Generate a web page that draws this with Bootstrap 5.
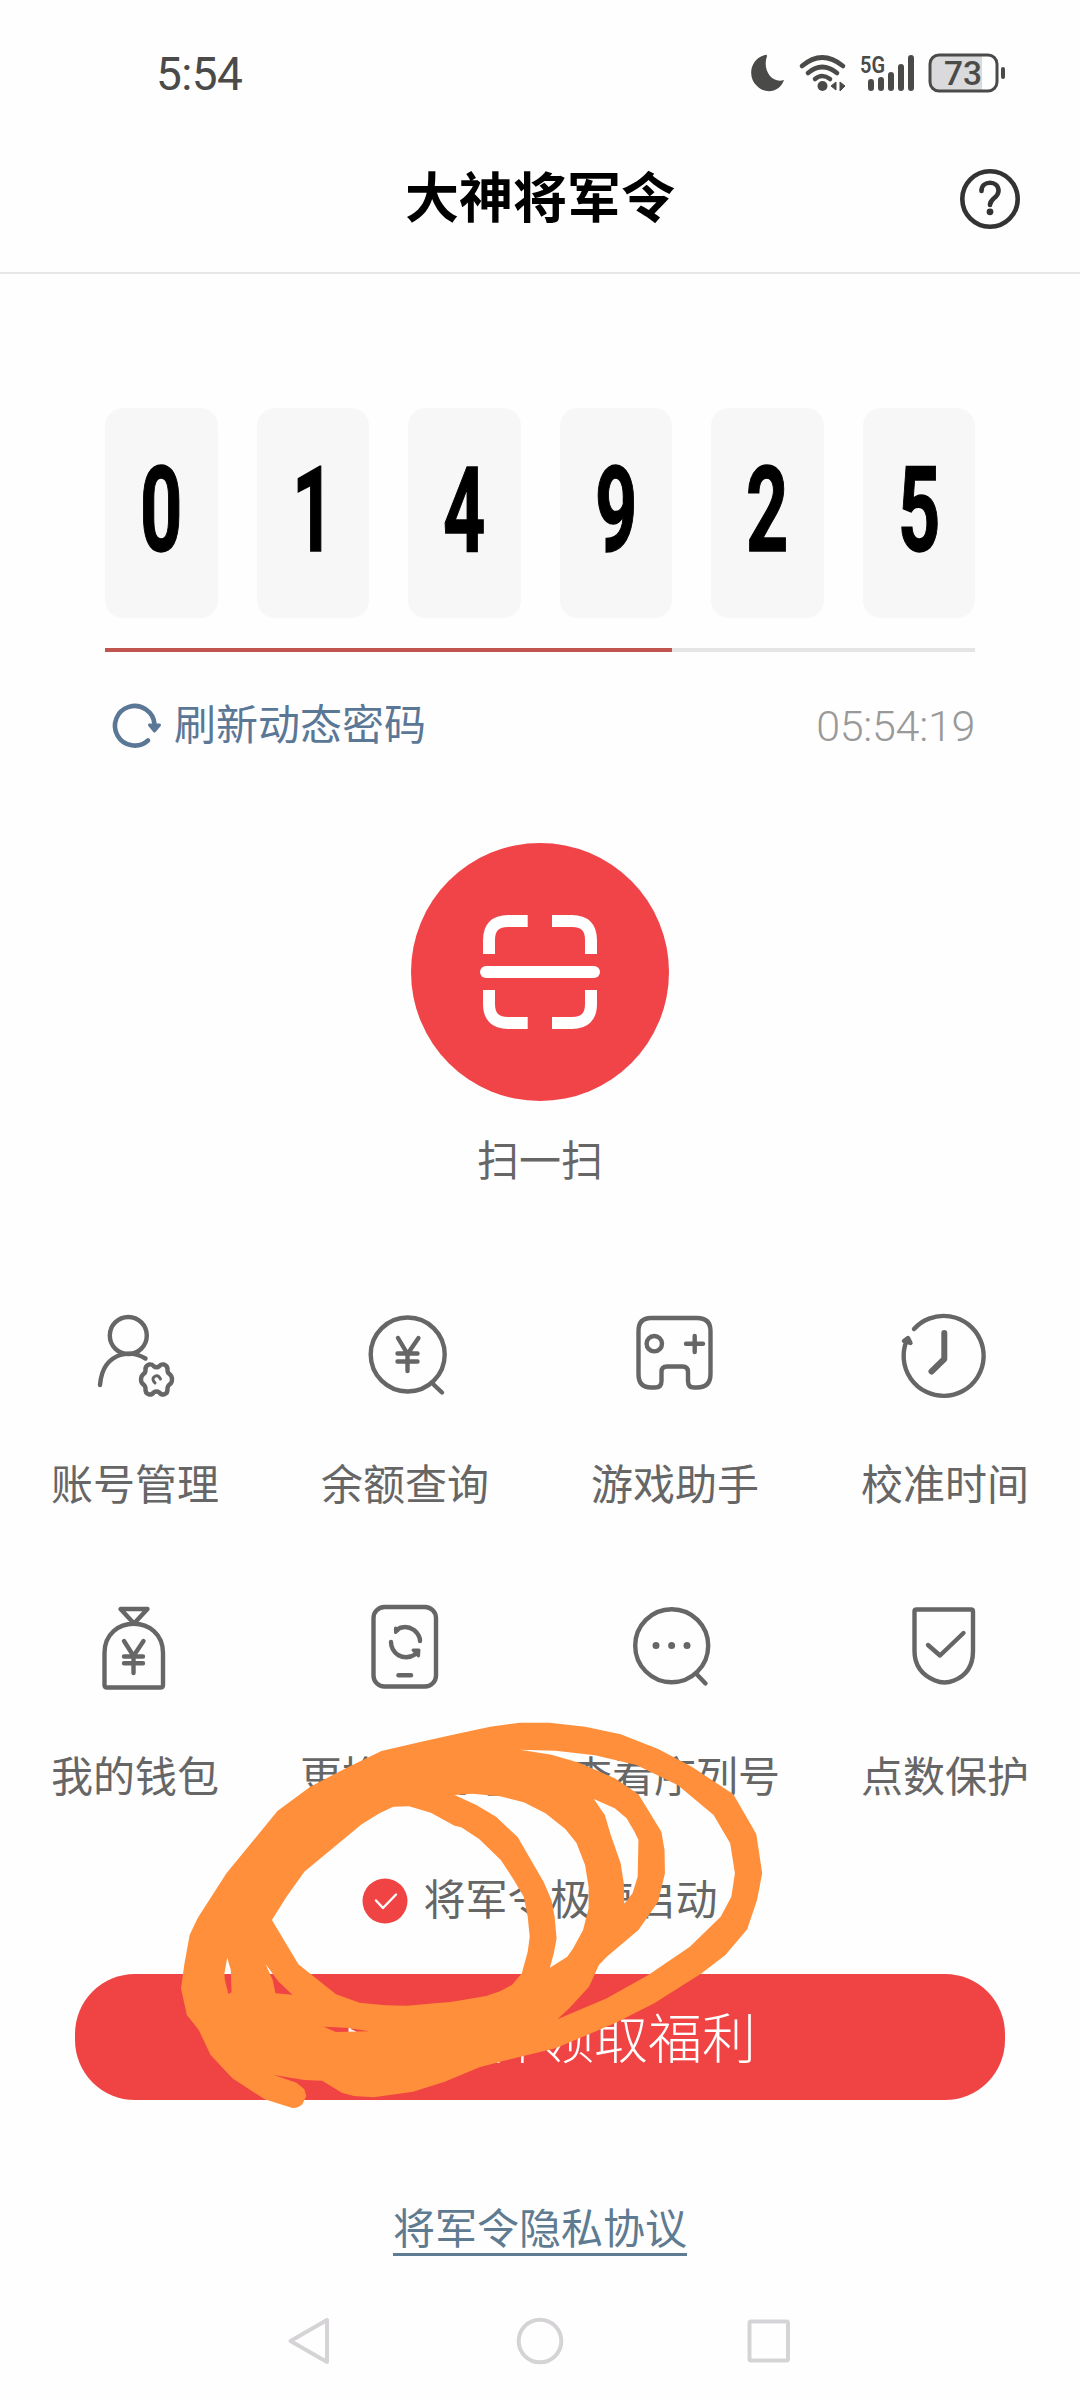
<!DOCTYPE html>
<html lang="zh-CN">
<head>
<meta charset="utf-8">
<meta name="viewport" content="width=device-width, initial-scale=1">
<title>大神将军令</title>
<link href="https://cdn.jsdelivr.net/npm/bootstrap@5.3.0/dist/css/bootstrap.min.css" rel="stylesheet">
<style>
  body { font-family: Roboto, "Noto Sans CJK SC", sans-serif; background: #fefefe; color: #666; font-size: 42px; line-height: 60px; }
  svg { display: block; flex: none; }
  .screen { width: 1080px; height: 2400px; }
  .statusbar { height: 148px; padding: 0 74px 0 156px; color: #4a4b49; }
  .clock { font-size: 46px; letter-spacing: -.6px; }
  .titlebar { height: 126px; border-bottom: 2px solid #e6e6e6; padding: 0 60px 0 120px; }
  .titlebar h1 { font-family: "Noto Sans CJK SC", sans-serif; font-size: 54px; line-height: 80px; font-weight: 700; color: #000; padding-bottom: 30px; }
  .titlebar svg { margin-bottom: 22px; }
  .code-area { padding: 134px 105px 0; }
  .digit { width: 112.5px; height: 210px; border-radius: 18px; background: #f7f7f7; color: #000; font-size: 119px; line-height: 205px; font-weight: 700; }
  .digit span { display: inline-block; transform: scaleX(.62); -webkit-text-stroke: 1.4px #000; }
  .countdown { height: 3.5px; margin-top: 30px; background: #e5e5e5; border-radius: 0; }
  .countdown .progress-bar { background: #c0544f; }
  .refresh { color: #5b7796; margin-top: 44.5px; }
  .stamp { color: #999; font-weight: 300; letter-spacing: -.3px; font-size: 43px; }
  .scan-area { margin-top: 87px; }
  .scan { width: 258px; height: 258px; background: #f04448; }
  .scan-label { margin-top: 31px; }
  .features { margin-top: 113px; }
  .feature { height: 292px; }
  .feature svg { fill: none; stroke: #666; stroke-width: 4.4; stroke-linecap: round; stroke-linejoin: round; }
  .feature span { margin-top: 51px; }
  .actions { margin-top: -18px; }
  .cta { width: 930px; height: 126px; margin-top: 43px; border-radius: 60px; background: #f04444; color: #fff; font-size: 54px; font-weight: 300; line-height: 80px; border: 0; }
  .cta, .cta:hover { padding: 7px 0 0; }
  .privacy { margin-top: 102px; color: #5f7b91; border-bottom: 3px solid #5f7b91; line-height: 56px; height: 54px; text-decoration: none; }
  .scribble { left: 160px; top: 1700px; pointer-events: none; }
</style>
</head>
<body>
<main class="screen position-relative overflow-hidden mx-auto d-flex flex-column">
  <header class="statusbar d-flex justify-content-between align-items-center">
    <span class="clock">5:54</span>
    <svg width="260" height="60" viewBox="746 44 260 60">
      <path d="M765 55C750 59 747 77 757 86C766 95 780 92 784 80C772 84 762 70 767 56Q767 54 765 55Z" fill="#4a4b49"/>
      <g fill="none" stroke="#4a4b49" stroke-width="4.6" stroke-linecap="round">
        <path d="M802 66Q822 49 843 66M808 73Q822 61 837 73M815 79Q822 73 830 79"/>
        <path stroke-width="6" d="M871 82V88M881 80V88M891 75V88M901 67V88M911 58V88"/>
      </g>
      <circle cx="822.500" cy="86" r="5" fill="#4a4b49"/>
      <path d="M836 82V90L831 86ZM840 82V91L845 86Z" fill="#4a4b49" stroke="#4a4b49"/>
      <text x="860" y="73" font-size="24" font-weight="600" textLength="25" lengthAdjust="spacingAndGlyphs" fill="#4a4b49">5G</text>
      <path d="M939 55H982V91H939Q930 91 930 82V64Q930 55 939 55Z" fill="#dad9db"/>
      <rect x="930" y="55" width="67" height="36" rx="9" fill="none" stroke="#4a4b49" stroke-width="3"/>
      <rect x="1001" y="67" width="4" height="12" rx="2" fill="#4a4b49"/>
      <text x="944" y="85" font-size="34" font-weight="500" textLength="38" lengthAdjust="spacingAndGlyphs" fill="#4a4b49">73</text>
    </svg>
  </header>

  <nav class="titlebar d-flex align-items-center">
    <h1 class="flex-grow-1 text-center m-0">大神将军令</h1>
    <svg width="60" height="60" viewBox="960 169 60 60" fill="none" stroke="#333" stroke-width="4.600" stroke-linecap="round">
      <circle cx="990" cy="199" r="27.700"/>
      <path d="M981.500 191C981.500 180 998.500 180 998.500 191C998.500 198 990 198 990 205"/>
      <circle cx="990" cy="211.800" r="3.400" fill="#333" stroke="none"/>
    </svg>
  </nav>

  <section class="code-area">
    <div class="d-flex justify-content-between text-center">
      <div class="digit"><span>0</span></div>
      <div class="digit"><span>1</span></div>
      <div class="digit"><span>4</span></div>
      <div class="digit"><span>9</span></div>
      <div class="digit"><span>2</span></div>
      <div class="digit"><span>5</span></div>
    </div>
    <div class="progress countdown"><div class="progress-bar" style="width:65.2%"></div></div>
    <div class="d-flex justify-content-between align-items-center refresh">
      <div class="d-flex align-items-center">
        <svg width="69" height="60" viewBox="105 696 69 60" fill="none" stroke="#5b7796" stroke-width="4.600" stroke-linecap="round">
          <path d="M148 740.500A19.800 19.800 0 1 1 154.500 724"/>
          <path d="M149.500 725H159.500L154.500 731Z" fill="#5b7796" stroke-width="3" stroke-linejoin="round"/>
        </svg>
        <span>刷新动态密码</span>
      </div>
      <span class="stamp">05:54:19</span>
    </div>
  </section>

  <section class="scan-area d-flex flex-column align-items-center">
    <div class="scan rounded-circle d-flex align-items-center justify-content-center">
      <svg width="124" height="120" viewBox="478 912 124 120" fill="none" stroke="#fff" stroke-width="12">
        <path d="M527.700 921H508Q489 921 489 940V954M552 921H572Q591 921 591 940V954M527.700 1023H508Q489 1023 489 1004V990M552 1023H572Q591 1023 591 1004V990"/>
        <path d="M486 972H594" stroke-linecap="round"/>
      </svg>
    </div>
    <span class="scan-label">扫一扫</span>
  </section>

  <section class="features row g-0 text-center">
    <div class="col-3 feature d-flex flex-column align-items-center">
      <svg width="100" height="100" viewBox="85 1305 100 100">
        <circle cx="128.300" cy="1335.500" r="18.500"/>
        <path d="M100 1385Q102 1360 122 1354.500Q134 1351.500 145.500 1358.500"/>
        <path d="M149 1364.500Q152 1364 153.500 1366Q156.500 1368.500 159.500 1366Q161 1364 164 1364.500Q168 1366 167.500 1370Q167.500 1373 169.500 1374Q172 1376 172 1379.500Q172 1383 169.500 1384.500Q167.500 1386 167.500 1389Q168 1393 164 1394.500Q161 1395 159.500 1392.500Q156.500 1390.500 153.500 1392.500Q152 1395 149 1394.500Q145 1393 145.500 1389Q145.500 1386 143.500 1384.500Q141 1383 141 1379.500Q141 1376 143.500 1374Q145.500 1373 145.500 1370Q145 1366 149 1364.500Z"/>
        <path stroke-width="3" d="M155 1383Q151.500 1379 154 1377Q157.500 1373.500 160.500 1379"/>
      </svg>
      <span>账号管理</span>
    </div>
    <div class="col-3 feature d-flex flex-column align-items-center">
      <svg width="100" height="100" viewBox="355 1305 100 100">
        <circle cx="407.700" cy="1354.500" r="37"/>
        <path d="M433 1384L442 1392.500M398 1338L407.500 1354L418.500 1338M407.500 1354V1371M397.500 1353.500H417.500M397.500 1361.500H417.500"/>
      </svg>
      <span>余额查询</span>
    </div>
    <div class="col-3 feature d-flex flex-column align-items-center">
      <svg width="100" height="100" viewBox="625 1305 100 100">
        <path d="M651 1318H697Q710.500 1318 710.500 1331V1374Q710.500 1387.500 697 1387.500H694Q688 1387.500 688 1381V1372Q688 1366.500 682.500 1366.500H667Q661.500 1366.500 661.500 1372V1381Q661.500 1387.500 655 1387.500H651Q638.500 1387.500 638.500 1374V1331Q638.500 1318 651 1318Z"/>
        <circle cx="654.300" cy="1343.700" r="7.700"/>
        <path d="M686 1343.700H703M694.700 1336V1352"/>
      </svg>
      <span>游戏助手</span>
    </div>
    <div class="col-3 feature d-flex flex-column align-items-center">
      <svg width="100" height="100" viewBox="895 1305 100 100">
        <path d="M914 1329A40 40 0 1 1 906.500 1341"/>
        <path d="M904 1341L908 1338L910.500 1343L907 1342Z"/>
        <path stroke-width="6" d="M944.300 1333V1359L931.500 1371.500"/>
      </svg>
      <span>校准时间</span>
    </div>
    <div class="col-3 feature d-flex flex-column align-items-center">
      <svg width="100" height="100" viewBox="85 1597 100 100">
        <path d="M120.500 1609H147.500L134 1623.500ZM104.500 1685V1653C104.500 1614 163 1614 163 1653V1685Q163 1687.500 160.500 1687.500H107Q104.500 1687.500 104.500 1685"/>
        <path d="M124 1641L133.500 1656L143.500 1641M133.500 1656V1673M124 1656.500H143M124 1663.300H143"/>
      </svg>
      <span>我的钱包</span>
    </div>
    <div class="col-3 feature d-flex flex-column align-items-center">
      <svg width="100" height="100" viewBox="355 1597 100 100">
        <rect x="373.500" y="1607" width="62.500" height="79.500" rx="11"/>
        <path d="M398.500 1675.300H411"/>
        <path d="M396 1630Q405 1624 414 1630Q420 1635 420 1641M391 1642Q391 1650 398 1655Q407 1660 416 1654"/>
        <path stroke-width="3" d="M395.500 1628V1632.500L398.500 1630ZM413 1650H419L418.500 1656Z" fill="#666"/>
      </svg>
      <span>更换手机号</span>
    </div>
    <div class="col-3 feature d-flex flex-column align-items-center">
      <svg width="100" height="100" viewBox="625 1597 100 100">
        <circle cx="671.700" cy="1645.700" r="36.500"/>
        <path d="M696.500 1674L705.500 1683.500"/>
        <path stroke-width="7" d="M656 1645.500h.01M671.600 1645.500h.01M687 1645.500h.01"/>
      </svg>
      <span>查看序列号</span>
    </div>
    <div class="col-3 feature d-flex flex-column align-items-center">
      <svg width="100" height="100" viewBox="895 1597 100 100">
        <path d="M916.500 1609.500H971Q973 1609.500 973 1611.500V1651Q973 1673 954 1680.500Q944.500 1684.500 935 1680.500Q914.500 1672 914.500 1651V1611.500Q914.500 1609.500 916.500 1609.500Z"/>
        <path d="M928 1645L940 1655.500L963.500 1633"/>
      </svg>
      <span>点数保护</span>
    </div>
  </section>

  <section class="actions d-flex flex-column align-items-center">
    <div class="d-flex align-items-center">
      <svg width="46" height="46" viewBox="362 1877 46 46">
        <circle cx="385" cy="1900" r="22.500" fill="#f04444"/>
        <path d="M376 1899.500L383 1907L396 1893.500" fill="none" stroke="#fff" stroke-width="2.400" stroke-linecap="round" stroke-linejoin="round"/>
      </svg>
      <span style="margin-left:15px">将军令极速启动</span>
    </div>
    <button class="btn cta" type="button">下载大神领取福利</button>
    <a class="privacy" href="#">将军令隐私协议</a>
  </section>

  <footer class="d-flex justify-content-between" style="padding:58px 287px 0 286px">
    <svg width="46" height="54" viewBox="286 2313 46 54" fill="none" stroke="#d6d3d7" stroke-width="4" stroke-linejoin="round"><path d="M327 2319V2361L290.500 2340Z"/></svg>
    <svg width="50" height="54" viewBox="515 2313 50 54" fill="none" stroke="#d6d3d7" stroke-width="4"><circle cx="540" cy="2340" r="21.300"/></svg>
    <svg width="46" height="54" viewBox="746 2313 46 54" fill="none" stroke="#d6d3d7" stroke-width="4"><rect x="748.500" y="2320.500" width="38.500" height="39" rx="1.500"/></svg>
  </footer>

  <!-- freehand marker loops drawn over the screen -->
  <svg class="scribble position-absolute" width="620" height="420" viewBox="0 0 1568 1260" preserveAspectRatio="none">
    <path fill="#ff8f3a" fill-rule="evenodd" d="M335 1224L265 1198L183 1135L128 1065L98 990L68 945L53 865L62 790L75 705L95 655L168 520L297 333L380 260L470 205L560 153L650 128L735 106L835 80L910 68L985 68L1075 80L1165 103L1260 147L1345 200L1450 283L1508 402L1523 520L1510 600L1485 688L1430 765L1370 820L1250 910L1150 970L1000 1045L870 1082L808 1102L720 1145L640 1175L540 1192L490 1188L460 1178L410 1142L365 1140L288 1125L345 1148L365 1168L370 1188L360 1213Q350 1225 335 1224Z
    M283 660L320 590L365 515L510 373L555 340L590 320L630 319L685 338L745 377L762 382L807 417L862 480L895 540L920 590L930 650L935 710L930 755L915 820L890 855L860 874L825 888L735 906L695 910L625 917L570 916L505 908L445 883L350 793Z
    M745 285L790 281L860 289L920 307L975 340L1025 387L1053 428L1075 495L1084 560L1084 625L1070 690L1045 745L1030 770L986 803L996 760L1003 715L998 650L990 600L970 545L937 478L905 412L850 350L800 315Z
    M1097 297L1125 345L1140 405L1165 490L1173 550L1174 612L1195 580L1208 530L1210 420L1200 395L1180 355L1150 325Z
    M910 149L1000 152L1100 166L1205 195L1310 256L1400 345L1442 430L1454 520L1445 590L1418 650L1340 740L1235 825L1130 895L1005 958L1035 925L1085 860L1110 795L1130 770L1210 690L1260 605L1277 520L1276 450L1268 395L1210 283L1150 235L1060 188L990 164Z
    M170 773L163 820L164 840L173 882L181 877L179 810Z
    M267 792L285 840L292 880L335 884L300 845Z
    M414 980L470 983L530 994L445 996Z"/>
  </svg>
</main>
<script src="https://cdn.jsdelivr.net/npm/bootstrap@5.3.0/dist/js/bootstrap.bundle.min.js"></script>
</body>
</html>
